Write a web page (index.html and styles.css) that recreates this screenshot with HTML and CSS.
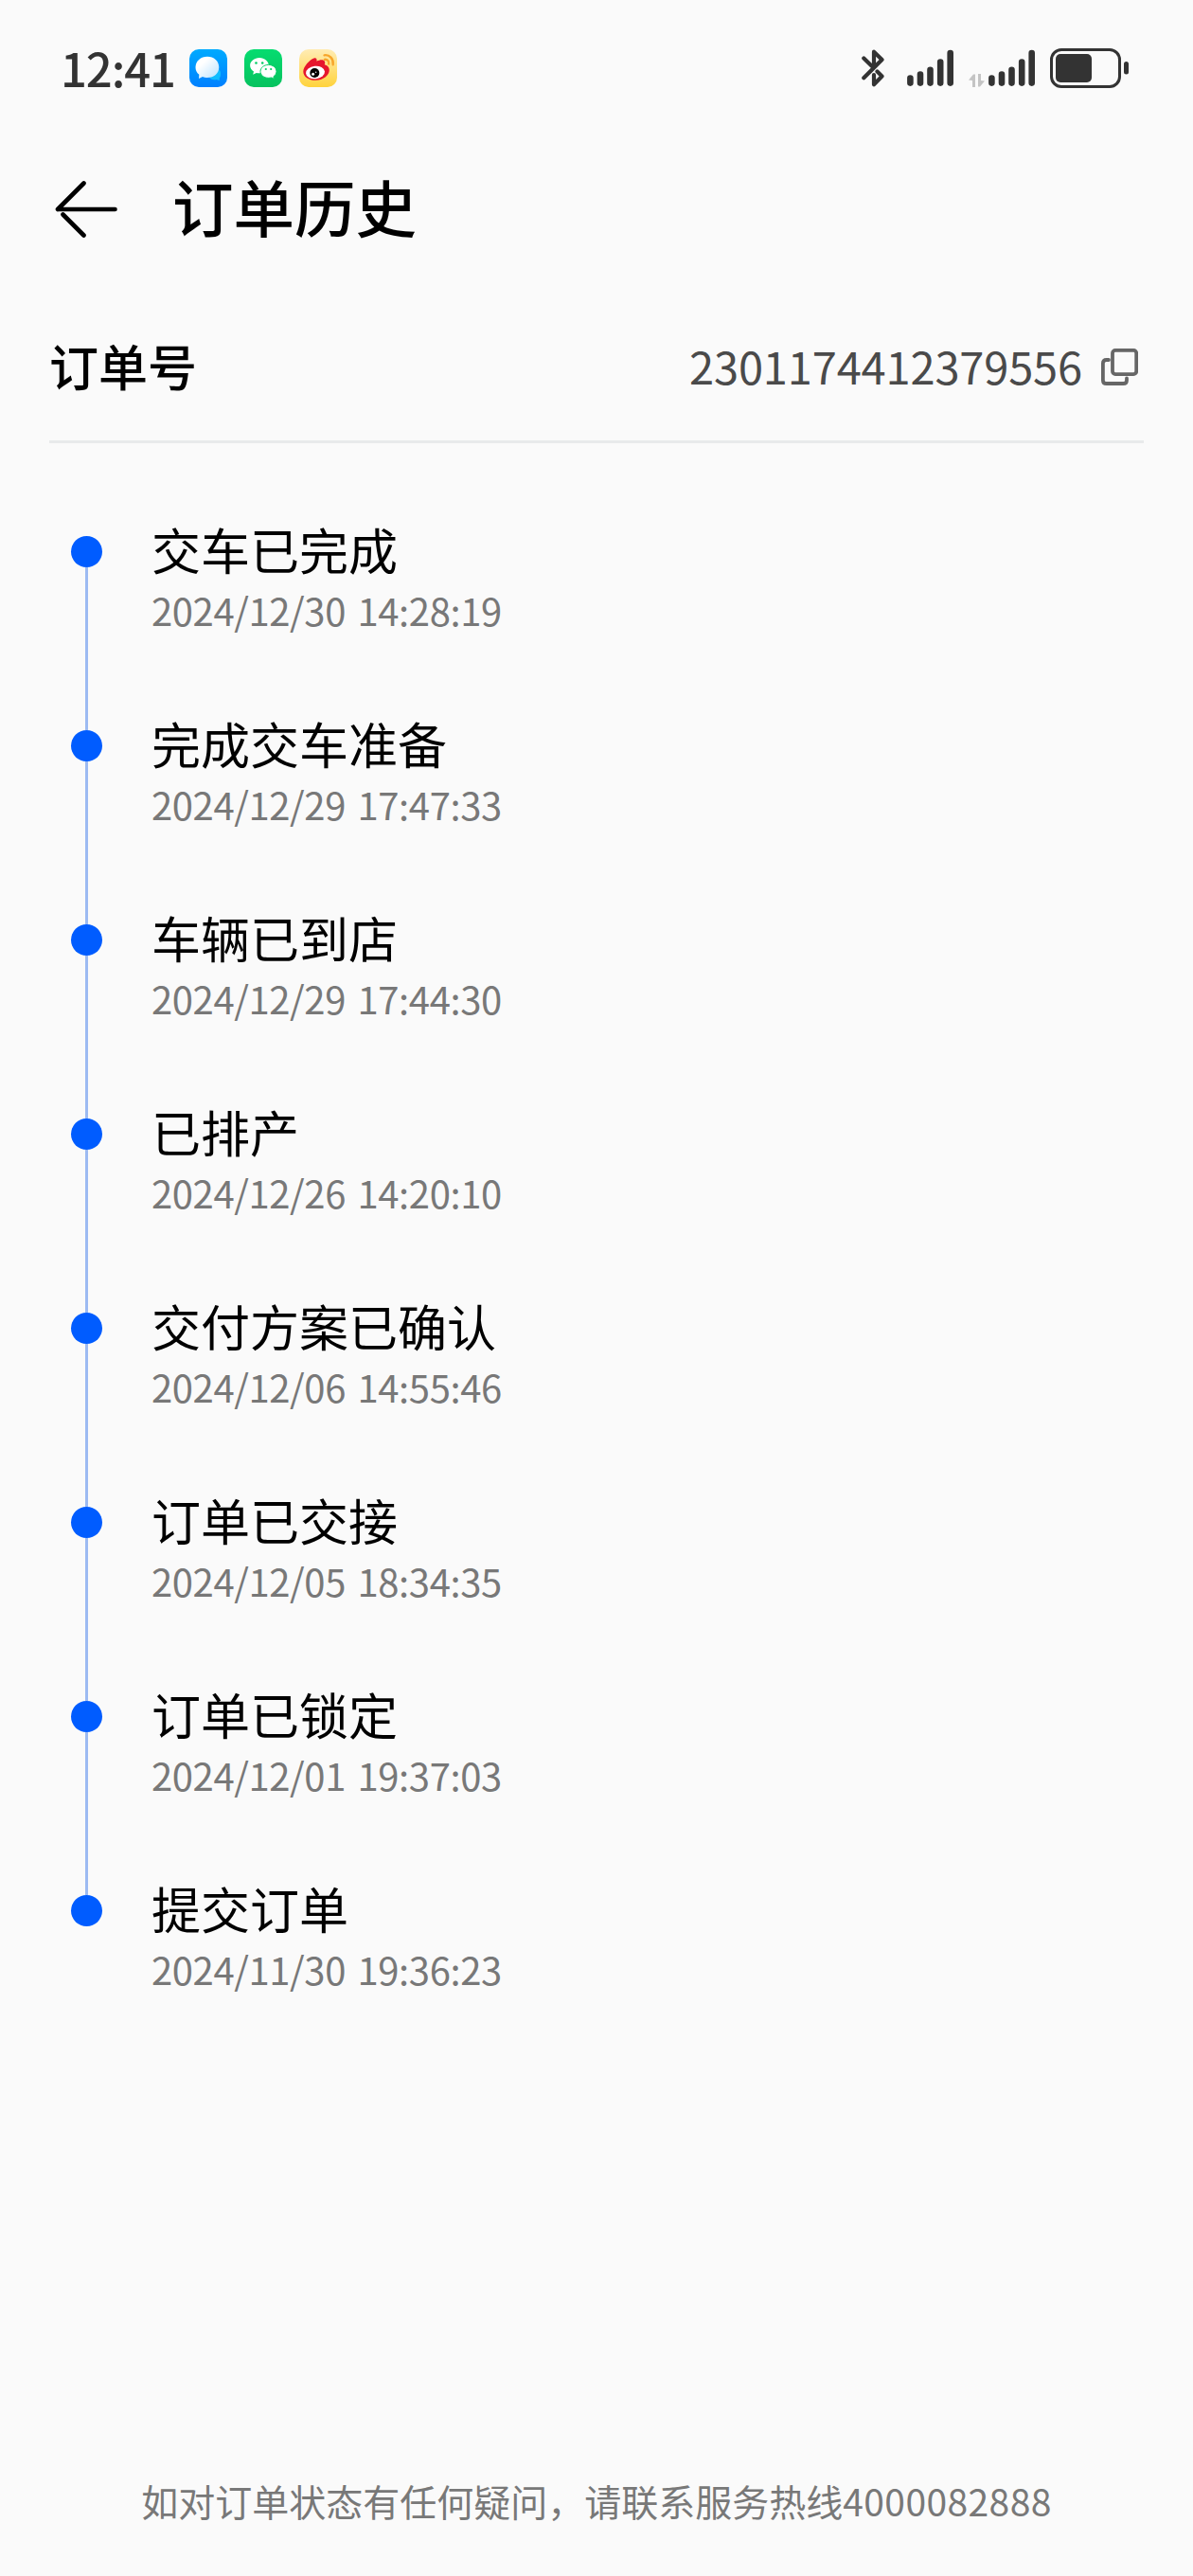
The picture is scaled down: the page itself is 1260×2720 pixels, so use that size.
FILE: index.html
```html
<!DOCTYPE html>
<html lang="zh-CN">
<head>
<meta charset="utf-8">
<title>订单历史</title>
<link rel="stylesheet" href="styles.css">
</head>
<body>
<div class="screen">
  <div class="status-bar">
    <div class="status-left">
      <span class="clock">12:41</span>
      <svg class="app-icon" viewBox="0 0 40 40">
        <defs>
          <linearGradient id="msgBg" x1="0" y1="0" x2="0" y2="1"><stop offset="0" stop-color="#00aaff"/><stop offset="1" stop-color="#0080ff"/></linearGradient>
          <linearGradient id="msgBubble" x1="0" y1="0" x2="1" y2="1"><stop offset=".3" stop-color="#fff"/><stop offset="1" stop-color="#b8e2ff"/></linearGradient>
        </defs>
        <rect width="40" height="40" rx="10" fill="url(#msgBg)"/>
        <path d="M30 20.500a6 6 0 0 1 3 6c0 2-.6 3.200-1.200 4v2.500l-3-1c-4 1-7-.5-8-3z" fill="#10bdff"/>
        <path d="M19 7.800c7 0 12.300 4.800 12.300 11.200S26 30 19 30c-2 0-3.500-.3-5-1l-4 2 .3-4.200C7.700 24.800 6.500 22 6.500 19 6.500 12.600 12 7.800 19 7.800z" fill="url(#msgBubble)"/>
      </svg>
      <svg class="app-icon" viewBox="0 0 40 40">
        <defs><linearGradient id="chatBg" x1="0" y1="0" x2="0" y2="1"><stop offset="0" stop-color="#06dc70"/><stop offset="1" stop-color="#06c25e"/></linearGradient></defs>
        <rect width="40" height="40" rx="10" fill="url(#chatBg)"/>
        <path d="M16 9c5.500 0 9.800 3.700 9.800 8.200S21.500 25.300 16 25.300c-1.200 0-2.200-.1-3.200-.4L9.200 26.700l.8-3.200c-2.400-1.500-3.900-3.700-3.900-6.300C6.100 12.700 10.500 9 16 9z" fill="#fff"/>
        <path d="M25.500 16.400c4.700 0 8.500 3.100 8.500 7 0 2.200-1.200 4.100-3.100 5.400l.6 2.500-2.900-1.400c-1 .3-2 .4-3.100.4-4.700 0-8.500-3.100-8.500-6.900s3.800-7 8.500-7z" fill="#fff" stroke="#06cc66" stroke-width="1"/>
        <g fill="#06cc66"><circle cx="12.500" cy="14.500" r="1.300"/><circle cx="19.200" cy="14.500" r="1.300"/><circle cx="22.800" cy="21" r="1.100"/><circle cx="28.200" cy="21" r="1.100"/></g>
      </svg>
      <svg class="app-icon" viewBox="0 0 40 40">
        <defs><linearGradient id="wbBg" x1="0" y1="0" x2="0" y2="1"><stop offset="0" stop-color="#ffecb4"/><stop offset="1" stop-color="#ffd33c"/></linearGradient></defs>
        <rect width="40" height="40" rx="10" fill="url(#wbBg)"/>
        <path d="M15.500 9.500c2-.8 3.500.2 3 3.300 3-1.700 7.500-2.300 8.500.3.500 1.300 0 2.200-.2 3.200 3 .8 5 2.900 5 5.700 0 5.500-6.500 10.800-14.500 10.800-7.300 0-13-3.700-13-9.300 0-5.300 7-12.500 11.200-14z" fill="#e6162d"/>
        <ellipse cx="17" cy="24.500" rx="10" ry="6.700" transform="rotate(-6 17 24.500)" fill="#fff"/>
        <circle cx="16.300" cy="25" r="5" fill="#000"/><circle cx="14.600" cy="26.300" r="1.500" fill="#fff"/><circle cx="17.700" cy="24.300" r=".7" fill="#fff"/>
        <path d="M26.500 6.300c5.500-.8 10 3.700 9.200 10M26.800 10.800c3-.4 5 2 4.400 4.800" fill="none" stroke="#f7a52b" stroke-width="2.300" stroke-linecap="round"/>
      </svg>
    </div>
    <div class="status-right">
      <svg class="bluetooth" viewBox="0 0 25 40"><path d="M2.300 9.500 11.500 18.500M16.500 23.500 21.500 28.500 13 37.200V27M13 15V2.700L21.500 11 2.300 30.200" fill="none" stroke="#333" stroke-width="4.200" stroke-linecap="round" stroke-linejoin="round"/></svg>
      <svg class="signal" viewBox="0 0 49 40"><path d="M3.400 30.600v5M14 26.600v9M24.500 21.800v13.800M35.200 13.600v22M45.700 4v31.600" stroke="#333" stroke-width="6.600" stroke-linecap="round"/></svg>
      <svg class="data-arrows" viewBox="0 0 17 14"><path d="M0 6.500 5 .5h2V14H4V7zM17 7.500 12 13.500h-2V0h3v7z" fill="#c4c4c4"/></svg>
      <svg class="signal signal-second" viewBox="0 0 49 40"><path d="M3.400 30.600v5M14 26.600v9M24.500 21.800v13.800M35.200 13.600v22M45.700 4v31.600" stroke="#333" stroke-width="6.600" stroke-linecap="round"/></svg>
      <svg class="battery" viewBox="0 0 84 42"><rect x="1.500" y="1.500" width="72" height="39" rx="10.500" fill="none" stroke="#333" stroke-width="3"/><rect x="6" y="6" width="38" height="30" rx="5" fill="#333"/><rect x="78" y="14" width="5" height="13.500" rx="2.500" fill="#333"/></svg>
    </div>
  </div>

  <header class="nav">
    <svg class="back" viewBox="0 0 66 60"><path d="M30.500 2.500 3 30M8.500 35.500 30.500 57.500M3 30h60.500" fill="none" stroke="#000" stroke-width="4.600" stroke-linecap="round" stroke-linejoin="round"/></svg>
    <h1 class="nav-title">订单历史</h1>
  </header>

  <section class="order">
    <span class="order-label">订单号</span>
    <span class="order-number">2301174412379556</span>
    <svg class="copy" viewBox="0 0 39 39"><rect x="12" y="1.900" width="25.200" height="25.200" rx="3" fill="none" stroke="#666" stroke-width="3.800"/><path d="M8 12H5.500Q1.900 12 1.900 15.600V33.400Q1.900 37 5.500 37H23.400Q27 37 27 33.400V31.500" fill="none" stroke="#666" stroke-width="3.800" stroke-linecap="round"/></svg>
  </section>

  <ol class="timeline">
    <li class="step"><span class="step-title">交车已完成</span><time class="step-time">2024/12/30 14:28:19</time></li>
    <li class="step"><span class="step-title">完成交车准备</span><time class="step-time">2024/12/29 17:47:33</time></li>
    <li class="step"><span class="step-title">车辆已到店</span><time class="step-time">2024/12/29 17:44:30</time></li>
    <li class="step"><span class="step-title">已排产</span><time class="step-time">2024/12/26 14:20:10</time></li>
    <li class="step"><span class="step-title">交付方案已确认</span><time class="step-time">2024/12/06 14:55:46</time></li>
    <li class="step"><span class="step-title">订单已交接</span><time class="step-time">2024/12/05 18:34:35</time></li>
    <li class="step"><span class="step-title">订单已锁定</span><time class="step-time">2024/12/01 19:37:03</time></li>
    <li class="step"><span class="step-title">提交订单</span><time class="step-time">2024/11/30 19:36:23</time></li>
  </ol>

  <footer class="hotline">如对订单状态有任何疑问，请联系服务热线<span class="phone">4000082888</span></footer>
</div>
</body>
</html>
```
FILE: styles.css
```css
* { box-sizing: border-box; margin: 0; padding: 0; }

body {
  background: #fafafa;
  color: #000;
  font-family: "Noto Sans CJK SC", sans-serif;
}

svg { display: block; flex: none; }

.screen {
  width: 1260px;
  height: 2720px;
  display: flex;
  flex-direction: column;
}

.status-bar {
  height: 144px;
  padding: 0 67px 0 64px;
  display: flex;
  justify-content: space-between;
  align-items: center;
}

.status-left { display: flex; align-items: center; gap: 18px; }

.clock {
  width: 118px;
  font-size: 49px;
  font-weight: 500;
  line-height: 50px;
  letter-spacing: -1.1px;
  color: #333;
  white-space: nowrap;
  padding-bottom: 3px;
}

.app-icon { width: 40px; height: 40px; }

.status-right { display: flex; align-items: center; }
.bluetooth { width: 25px; height: 40px; margin-right: 23px; }
.signal { width: 49px; height: 40px; }
.data-arrows { width: 17px; height: 14px; margin: 25px 4px 0 16px; }
.signal-second { margin-right: 16px; }
.battery { width: 84px; height: 42px; }

.nav {
  height: 154px;
  padding-left: 58px;
  display: flex;
  align-items: center;
}

.back { width: 66px; height: 60px; }
.nav-title {
  margin-left: 58px;
  padding-bottom: 8px;
  font-size: 64.500px;
  font-weight: 500;
  line-height: 80px;
}

.order {
  height: 170px;
  margin: 0 52px;
  padding: 8px 6px 0 0;
  border-bottom: 3px solid #e8eaeb;
  display: flex;
  align-items: center;
}

.order-label {
  flex: 1;
  font-size: 52px;
  font-weight: 500;
  line-height: 64px;
}

.order-number {
  font-size: 47px;
  line-height: 64px;
  letter-spacing: -.15px;
  color: #4a4a4a;
}

.copy { width: 39px; height: 39px; margin: 4px 0 0 20px; }

.timeline { margin: 78px 0 0 75px; list-style: none; }

.step {
  position: relative;
  height: 205px;
  padding: 2px 0 0 85px;
  display: flex;
  flex-direction: column;
}

.step::before {
  content: "";
  position: absolute;
  left: 0;
  top: 20px;
  width: 33px;
  height: 33px;
  border-radius: 50%;
  background: #005cff;
}

.step:not(:last-child)::after {
  content: "";
  position: absolute;
  left: 15px;
  top: 53px;
  width: 3px;
  height: 172px;
  background: #9cbaf2;
}

.step-title { font-size: 52px; line-height: 64px; }

.step-time {
  font-size: 40px;
  line-height: 65px;
  letter-spacing: -.4px;
  word-spacing: 4px;
  color: #787878;
}

.hotline {
  margin-top: auto;
  padding-bottom: 50px;
  font-size: 39px;
  line-height: 60px;
  color: #787878;
  text-align: center;
}

.phone { letter-spacing: .4px; }
```
